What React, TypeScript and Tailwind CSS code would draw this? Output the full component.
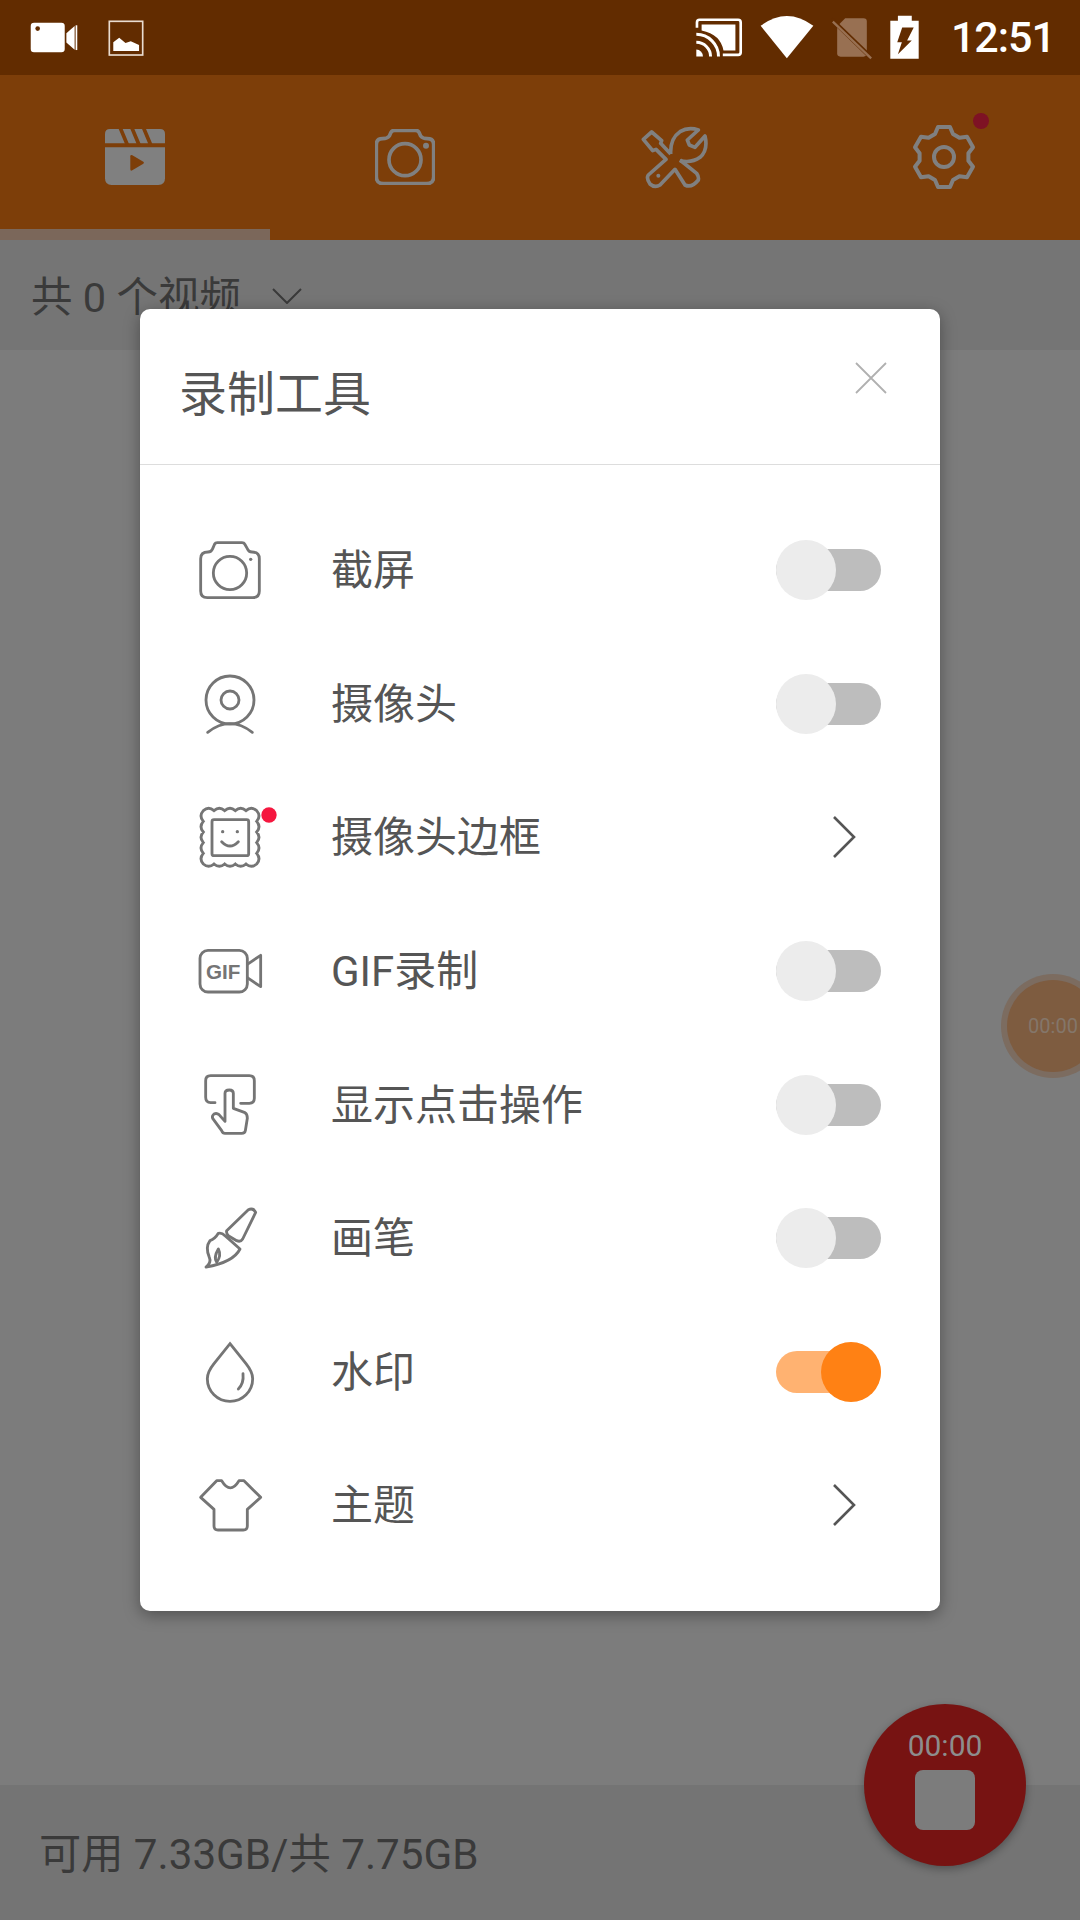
import React from "react";

const gearPath = () => {
  let d = "";
  for (let i = 0; i < 6; i++) {
    const a = (i * Math.PI) / 3 - Math.PI / 2;
    const pt = (r: number, off: number) => {
      const x = r * Math.cos(a) - off * Math.sin(a);
      const y = r * Math.sin(a) + off * Math.cos(a);
      return `${x.toFixed(1)} ${y.toFixed(1)}`;
    };
    d += `${i === 0 ? "M" : "L"}${pt(23, -9)} L${pt(30, -6)} L${pt(30, 6)} L${pt(23, 9)} `;
  }
  return d + "Z";
};

const line = "fill-none stroke-[#757575] stroke-[8.5] overflow-visible";

const IconCamera = () => (
  <svg viewBox="75 77 210 210" className={`w-[70px] h-[70px] ${line}`} strokeLinejoin="round">
    <path d="M114 128Q124 128 128 118L134 104Q136 100 142 100H216Q222 100 224 104L232 118Q236 128 246 128Q268 128 268 148V245Q268 265 248 265H112Q92 265 92 245V148Q92 128 114 128Z" />
    <circle cx="180" cy="191" r="50" />
    <circle cx="242" cy="150" r="5" className="fill-[#757575] stroke-none" />
  </svg>
);

const IconWebcam = () => (
  <svg viewBox="75 480 210 210" className={`w-[70px] h-[70px] ${line}`} strokeLinecap="round">
    <circle cx="180" cy="573" r="72" />
    <circle cx="180" cy="573" r="27" />
    <path d="M113 670Q180 618 247 670" />
  </svg>
);

const IconFrame = () => (
  <svg viewBox="75 879 210 210" className={`w-[70px] h-[70px] ${line}`} strokeLinecap="round">
    <path d="M100 905q16 -14 32 0q16 -14 32 0q16 -14 32 0q16 -14 32 0q16 -14 32 0q14 16 0 32q14 16 0 32q14 16 0 32q14 16 0 32q14 16 0 32q-16 14 -32 0q-16 14 -32 0q-16 14 -32 0q-16 14 -32 0q-16 14 -32 0q-14 -16 0 -32q-14 -16 0 -32q-14 -16 0 -32q-14 -16 0 -32q-14 -16 0 -32Z" />
    <rect x="126" y="932" width="110" height="108" rx="6" />
    <circle cx="158" cy="968" r="5" className="fill-[#757575] stroke-none" />
    <circle cx="202" cy="968" r="5" className="fill-[#757575] stroke-none" />
    <path d="M155 998Q180 1024 205 998" />
    <circle cx="297" cy="918" r="23" className="fill-[#f5173f] stroke-none" />
  </svg>
);

const IconGif = () => (
  <svg viewBox="75 1280 210 210" className={`w-[70px] h-[70px] ${line}`} strokeLinejoin="round">
    <rect x="90" y="1323" width="142" height="125" rx="24" />
    <path d="M232 1365L272 1338V1432L232 1405" />
    <text x="108" y="1408" className="fill-[#757575] stroke-none font-['Liberation_Sans',sans-serif] font-bold text-[62px]">
      GIF
    </text>
  </svg>
);

const IconTouch = () => (
  <svg viewBox="75 90 210 210" className={`w-[70px] h-[70px] ${line}`} strokeLinejoin="round" strokeLinecap="round">
    <path d="M135 188H122Q107 188 107 172V122Q107 107 122 107H238Q253 107 253 122V175Q253 190 238 190H212" />
    <path d="M165 244V160Q165 150 178 150Q190 150 190 160V205L225 218Q232 222 232 235L226 272Q225 280 215 280H165Q158 280 155 272L128 235Q125 228 132 222Q140 218 147 224L165 244" />
  </svg>
);

const IconBrush = () => (
  <svg viewBox="75 492 210 210" className={`w-[70px] h-[70px] ${line}`} strokeLinejoin="round">
    <path d="M170 575L235 512Q250 505 257 520L218 600Q212 610 200 605L175 590Q168 582 170 575Z" />
    <path d="M165 590L210 630Q190 670 108 684Q125 670 118 655Q105 625 120 605Q135 600 145 583Q155 580 165 590Z" />
    <path d="M145 630Q130 655 140 670Q155 650 145 630Z" />
  </svg>
);

const IconDrop = () => (
  <svg viewBox="72 890 210 210" className={`w-[70px] h-[70px] ${line}`} strokeLinecap="round">
    <path d="M177 910L225 970Q245 995 245 1015A68 68 0 0 1 109 1015Q109 995 129 970Z" />
    <path d="M216 1000Q219 1030 202 1046" />
  </svg>
);

const IconShirt = () => (
  <svg viewBox="75 1290 210 210" className={`w-[70px] h-[70px] ${line}`} strokeLinejoin="round">
    <path d="M155 1322Q181 1365 207 1322H222L272 1372L232 1408V1458Q232 1470 220 1470H144Q132 1470 132 1458V1408L92 1372L140 1322Z" />
  </svg>
);

const Toggle = ({ on }: { on: boolean }) => (
  <div className="relative w-[105px] h-[60px] flex items-center">
    <div className={`w-full h-[42px] rounded-full ${on ? "bg-[#ffb271]" : "bg-[#bdbdbd]"}`} />
    <div
      className={`absolute top-0 w-[60px] h-[60px] rounded-full ${
        on ? "right-0 bg-[#ff8114]" : "left-0 bg-[#ececec]"
      }`}
    />
  </div>
);

const Arrow = () => (
  <div className="w-[105px] pl-[56px]">
    <svg viewBox="0 0 24 44" className="w-[24px] h-[44px] fill-none stroke-[#555555] stroke-[2.6]">
      <path d="M2 2L22 22L2 42" />
    </svg>
  </div>
);

const rows = [
  { icon: <IconCamera />, label: "截屏", kind: "off" },
  { icon: <IconWebcam />, label: "摄像头", kind: "off" },
  { icon: <IconFrame />, label: "摄像头边框", kind: "arrow" },
  { icon: <IconGif />, label: "GIF录制", kind: "off" },
  { icon: <IconTouch />, label: "显示点击操作", kind: "off" },
  { icon: <IconBrush />, label: "画笔", kind: "off" },
  { icon: <IconDrop />, label: "水印", kind: "on" },
  { icon: <IconShirt />, label: "主题", kind: "arrow" },
];

const StatusBar = () => (
  <div className="h-[75px] shrink-0 bg-[#622c00] flex items-center justify-between pl-[28px] pr-[25px]">
    <div className="flex items-center gap-[27px]">
      <svg viewBox="25 35 155 100" className="w-[52px] h-[33px] fill-white">
        <rect x="32" y="40" width="103" height="90" rx="10" />
        <circle cx="53" cy="58" r="7" fill="#622c00" />
        <path d="M140 72L165 50V122L140 100Z" />
        <rect x="168" y="48" width="5" height="75" />
      </svg>
      <svg viewBox="260 25 115 115" className="w-[38px] h-[38px]">
        <rect x="267" y="32" width="101" height="102" fill="none" stroke="#e9dcd0" strokeWidth="5" />
        <path d="M279 122V95L297 82L316 98L332 92L357 104V122Z" fill="#fff" />
      </svg>
    </div>
    <div className="flex items-center">
      <svg viewBox="40 30 160 135" className="w-[53px] h-[45px]">
        <path d="M52 68V52Q52 44 60 44H176Q184 44 184 52V142Q184 150 176 150H130" fill="none" stroke="#fff" strokeWidth="8" />
        <path d="M66 58H168V137H132Q124 88 66 76Z" fill="#fff" />
        <path d="M50 134A20 20 0 0 1 70 155H50Z" fill="#fff" />
        <path d="M50 112A43 43 0 0 1 93 155" fill="none" stroke="#fff" strokeWidth="9" />
        <path d="M50 88A67 67 0 0 1 117 155" fill="none" stroke="#fff" strokeWidth="9" />
      </svg>
      <svg viewBox="235 15 175 165" className="ml-[12px] w-[58px] h-[55px]">
        <path d="M243 62Q322 3 402 62L322 160Z" fill="#fff" />
      </svg>
      <svg viewBox="455 30 125 135" className="ml-[15px] w-[42px] h-[45px]">
        <path d="M497 40H552Q562 40 562 50V145Q562 155 552 155H483Q473 155 473 145V64Z" fill="#987052" />
        <path d="M455 42L575 158" stroke="#622c00" strokeWidth="13" />
        <path d="M460 50L575 160" stroke="#987052" strokeWidth="7" />
      </svg>
      <svg viewBox="650 25 100 145" className="ml-[15px] w-[33px] h-[48px]">
        <path d="M680 30H722V45H743V160H657V45H680Z" fill="#fff" />
        <path d="M693 66H728L708 105H722L680 147L692 110H678Z" fill="#622c00" />
      </svg>
      <span className="ml-[30px] text-white text-[43px] leading-none font-medium tracking-[-1px] font-['Roboto',sans-serif]">
        12:51
      </span>
    </div>
  </div>
);

const TabBar = () => (
  <div className="relative h-[165px] shrink-0 bg-[#7d3e09] grid grid-cols-4 items-center pb-[1px]">
    <div className="flex justify-center">
      <svg viewBox="45 57 180 168" className="w-[60px] h-[56px]">
        <path d="M45 100V72Q45 57 60 57H210Q225 57 225 72V100Z" fill="#808080" />
        <path d="M90 52L112 104M125 52L147 104M160 52L182 104" stroke="#7d3e09" strokeWidth="11" />
        <path d="M45 112H225V205Q225 225 205 225H65Q45 225 45 205Z" fill="#808080" />
        <path d="M121 139Q121 133 127 136L160 155Q164 158 160 161L127 181Q121 184 121 178Z" fill="#7d3e09" />
      </svg>
    </div>
    <div className="flex justify-center">
      <svg viewBox="855 57 180 168" className="w-[60px] h-[56px] fill-none stroke-[#808080] stroke-[11]">
        <path d="M878 86Q892 86 898 78L903 67Q906 61 914 61H976Q984 61 987 67L992 78Q998 86 1012 86Q1031 86 1031 104V200Q1031 221 1010 221H880Q859 221 859 200V104Q859 86 878 86Z" />
        <circle cx="945" cy="149" r="48" />
        <circle cx="1008" cy="107" r="9" className="fill-[#808080] stroke-none" />
      </svg>
    </div>
    <div className="flex justify-center">
      <svg viewBox="30 45 210 195" className="w-[70px] h-[65px] fill-none stroke-[#808080] stroke-[11]" strokeLinejoin="round">
        <path d="M122 132L92 100L95 92L65 66L40 88L68 122L78 118L108 148L55 195Q48 205 60 222Q75 235 90 225L135 178L165 225Q185 235 205 210Q207 200 200 190L150 150" />
        <path d="M122 132Q120 85 150 65Q175 50 205 60L172 90L178 105L195 112L225 78Q235 120 210 142Q185 160 150 152" />
        <circle cx="85" cy="197" r="6" className="fill-[#808080] stroke-none" />
      </svg>
    </div>
    <div className="relative flex justify-center pr-[2px]">
      <svg viewBox="-35 -35 70 70" className="w-[70px] h-[70px] fill-none stroke-[#808080] stroke-[4]" strokeLinejoin="round">
        <path d={gearPath()} />
        <circle r="10" />
      </svg>
      <div className="absolute left-[163px] top-[-9px] w-[16px] h-[16px] rounded-full bg-[#7e1224]" />
    </div>
    <div className="absolute left-0 bottom-0 w-[270px] h-[11px] bg-[#7b675a]" />
  </div>
);

const Dialog = () => (
  <div className="absolute left-[140px] top-[309px] w-[800px] h-[1302px] bg-white rounded-[10px] shadow-[0_4px_16px_rgba(0,0,0,0.35)] flex flex-col">
    <div className="h-[156px] shrink-0 border-b border-[#dddddd] flex items-start justify-between pl-[39px] pr-[53px]">
      <span className="mt-[53px] text-[48px] leading-[66px] text-[#555555]">录制工具</span>
      <svg viewBox="0 0 32 32" className="mt-[53px] w-[32px] h-[32px] stroke-[#b0b0b0] stroke-[1.8]">
        <path d="M1 1L31 31M31 1L1 31" />
      </svg>
    </div>
    <div className="pt-[38.5px] flex flex-col">
      {rows.map((row) => (
        <div key={row.label} className="h-[133.6px] flex items-center pl-[55px] pr-[59px]">
          {row.icon}
          <span className="ml-[66px] mt-[2px] flex-1 text-[42px] leading-none text-[#555555]">{row.label}</span>
          {row.kind === "arrow" ? <Arrow /> : <Toggle on={row.kind === "on"} />}
        </div>
      ))}
    </div>
  </div>
);

export default function App() {
  return (
    <div className="relative w-[1080px] h-[1920px] overflow-hidden flex flex-col bg-[#7c7c7c] font-['Roboto','Noto_Sans_CJK_SC',sans-serif]">
      <StatusBar />
      <TabBar />
      <div className="h-[110px] shrink-0 bg-[#757575] flex items-start pl-[31px] pt-[30px] text-[#3a3a3a]">
        <span className="text-[41.5px] leading-[56px]">共 0 个视频</span>
        <svg viewBox="0 0 30 16" className="ml-[31px] mt-[18px] w-[30px] h-[16px] fill-none stroke-[#3a3a3a] stroke-[2]">
          <path d="M1 1L15 15L29 1" />
        </svg>
      </div>
      <div className="flex-1" />
      <div className="h-[135px] shrink-0 bg-[#747474] flex items-center pl-[39px] pt-[4px] text-[42.2px] text-[#3a3a3a]">
        可用 7.33GB/共 7.75GB
      </div>

      <Dialog />

      {/* floating timer, half off the edge */}
      <div className="absolute left-[1001px] top-[974px] w-[104px] h-[104px] rounded-full bg-[#7c6c60] flex items-center justify-center">
        <div className="w-[92px] h-[92px] rounded-full bg-[#7e5c40] flex items-center justify-center text-[20px] text-[#84766a]">
          00:00
        </div>
      </div>

      {/* record button */}
      <div className="absolute left-[864px] top-[1704px] w-[162px] h-[162px] rounded-full bg-[#771312] shadow-[0_3px_8px_rgba(0,0,0,0.3)] flex flex-col items-center pt-[26px]">
        <span className="text-[30px] leading-[32px] text-[#8d8d8d]">00:00</span>
        <div className="mt-[8px] w-[60px] h-[60px] rounded-[8px] bg-[#7c7c7c]" />
      </div>
    </div>
  );
}
